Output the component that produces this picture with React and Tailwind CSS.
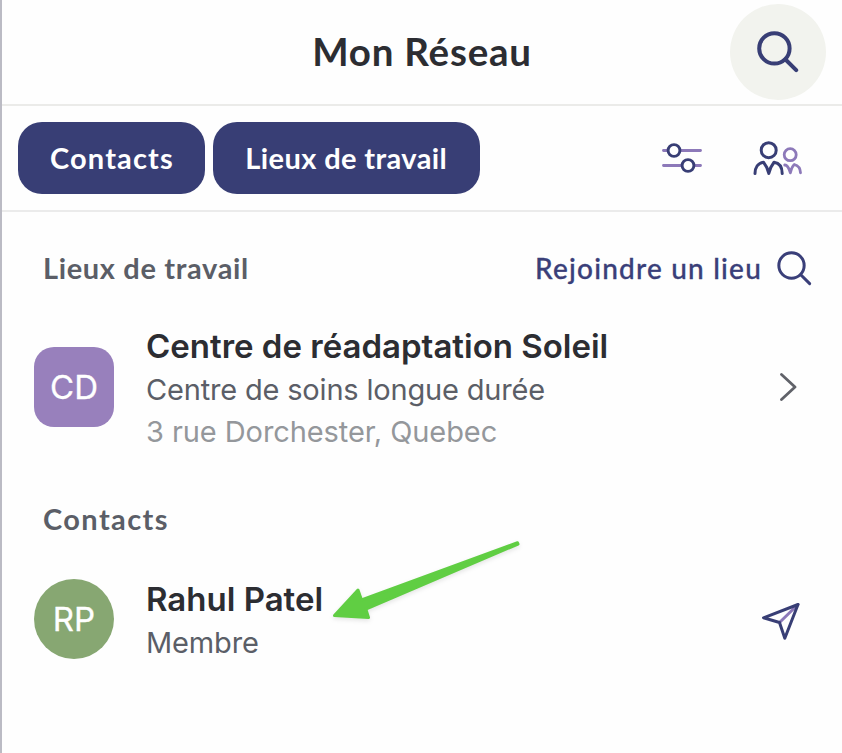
const heading = "font-['Lato','Open_Sans',sans-serif]";

function SearchIcon({ className, strokeWidth }) {
  return (
    <svg className={className} viewBox="0 0 42 42" fill="none" stroke="currentColor" strokeWidth={strokeWidth} strokeLinecap="round">
      <circle cx="17.4" cy="17.4" r="15.2" />
      <path d="M28.5 28.5L39.2 39.2" />
    </svg>
  );
}

function FilterIcon() {
  return (
    <svg className="h-[32px] w-[40px]" viewBox="0 0 40 32" fill="none" strokeWidth="2.9" strokeLinecap="round">
      <path d="M1.5 8.5H38.5M1.5 23.5H38.5" stroke="#8d79b9" />
      <circle cx="12" cy="8.5" r="5.9" fill="#fff" stroke="#383e75" />
      <circle cx="26" cy="23.5" r="5.9" fill="#fff" stroke="#383e75" />
    </svg>
  );
}

function PeopleIcon() {
  return (
    <svg className="h-[36px] w-[50px]" viewBox="0 0 50 36" fill="none" strokeWidth="3" strokeLinecap="round" strokeLinejoin="round">
      <circle cx="15.7" cy="10.2" r="7.5" stroke="#383e75" />
      <path d="M2 33.5C2 27.5 5 23 10.500 22.2C12.800 25 14.800 28.500 15.800 33.500C16.800 28.500 18.800 25 21 22.200C26.500 23 29.200 27.500 29.200 33.500" stroke="#383e75" />
      <g stroke="#8d79b9" strokeWidth="2.8">
        <circle cx="37.2" cy="14.7" r="6" />
        <path d="M31.700 25C34.500 24.700 36 28.200 37.400 32.800C38.300 28.800 39.800 25.800 41.300 24.500C45.300 25.500 47.300 28.500 47.500 32.800" />
      </g>
    </svg>
  );
}

function SendIcon() {
  return (
    <svg className="h-[40px] w-[40px]" viewBox="0 0 40 40" fill="none" strokeWidth="3" strokeLinecap="round" strokeLinejoin="round">
      <path d="M18.500 20.500L37 2.500" stroke="#8d79b9" />
      <path d="M37 2.500L2.500 15.800L18.500 20.500L23.800 36.300Z" stroke="#383e75" />
    </svg>
  );
}

function Avatar({ className, children }) {
  return (
    <div className={`flex h-20 w-20 shrink-0 items-center justify-center text-[33px] leading-none text-white [-webkit-text-stroke:0.3px_#fff] ${className}`}>
      {children}
    </div>
  );
}

export default function App() {
  return (
    <div className="h-[753px] w-[842px] overflow-hidden border-l-2 border-[#bbbbc4] bg-[#fefefe] font-['Inter',sans-serif] text-[#2c2d32]">
      <header className="grid h-[106px] grid-cols-[1fr_auto_1fr] items-center border-b-2 border-[#ebebe9] pr-4 pl-4">
        <span />
        <h1 className={`${heading} pb-[3px] text-[38.5px] leading-[48px] font-bold tracking-[0.8px] whitespace-nowrap`}>Mon Réseau</h1>
        <button className="flex h-24 w-24 items-center justify-center justify-self-end rounded-full bg-[#f2f3ee] text-[#383e75]">
          <SearchIcon className="h-[42px] w-[42px]" strokeWidth={4} />
        </button>
      </header>

      <nav className="flex h-[106px] items-center border-b-2 border-[#ebebeb] pr-[39px] pl-4">
        <div className={`${heading} flex gap-2 text-[29px] font-bold text-white`}>
          <button className="h-[72px] w-[187px] rounded-[24px] bg-[#383e75] pl-px tracking-[1.15px] whitespace-nowrap">Contacts</button>
          <button className="h-[72px] w-[266.500px] rounded-[24px] bg-[#383e75] tracking-[0.4px] whitespace-nowrap">Lieux de travail</button>
        </div>
        <div className="ml-auto flex items-center gap-[51px]">
          <FilterIcon />
          <PeopleIcon />
        </div>
      </nav>

      <main>
        <div className={`${heading} flex h-[112px] items-center justify-between pr-[30px] pl-[41px] text-[29px] font-bold`}>
          <h2 className="tracking-[0.65px] text-[#5b5e67]">Lieux de travail</h2>
          <button className="flex items-center gap-[15px] text-[28px] font-medium tracking-[1.2px] text-[#3a3f79]">
            <span className="[-webkit-text-stroke:0.3px_#3a3f79]">Rejoindre un lieu</span>
            <SearchIcon className="mt-px h-[35px] w-[35px]" strokeWidth={3.6} />
          </button>
        </div>

        <div className="mt-[2px] flex h-[122px] items-center pr-[45px] pl-8">
          <Avatar className="rounded-[20px] bg-[#9880bc]">CD</Avatar>
          <div className="ml-8 pt-[3px] whitespace-nowrap">
            <h3 className="text-[33px] leading-[43px] font-semibold">Centre de réadaptation Soleil</h3>
            <p className="text-[29px] leading-[43px] tracking-[-0.18px] text-[#5b5e67]">Centre de soins longue durée</p>
            <p className="text-[29px] leading-[42px] tracking-[-0.08px] text-[#94979b]">3 rue Dorchester, Quebec</p>
          </div>
          <svg className="ml-auto h-[28px] w-[17px]" viewBox="0 0 17 28" fill="none" stroke="#606269" strokeWidth="2.8" strokeLinecap="round" strokeLinejoin="round">
            <path d="M1.500 1.500L15 14L1.500 26.500" />
          </svg>
        </div>

        <h2 className={`${heading} mt-[48px] pl-[41px] text-[29px] leading-[46px] font-bold tracking-[1.4px] text-[#5b5e67]`}>Contacts</h2>

        <div className="relative mt-[34px] flex h-[86px] items-center pr-[41px] pl-8">
          <Avatar className="rounded-full bg-[#87a772]">RP</Avatar>
          <div className="ml-8 pt-[3px] whitespace-nowrap">
            <h3 className="text-[33px] leading-[43px] font-semibold">Rahul Patel</h3>
            <p className="text-[29px] leading-[43px] tracking-[-0.15px] text-[#5b5e67]">Membre</p>
          </div>
          <div className="ml-auto pt-[6px]">
            <SendIcon />
          </div>
          <svg className="absolute -top-[36px] left-[328px] h-[84px] w-[194px] drop-shadow-[0_2px_2px_rgba(0,0,0,0.1)]" viewBox="0 0 194 84" fill="#60ce43" stroke="#60ce43" strokeWidth="3" strokeLinejoin="round">
            <path d="M4.500 75.500L28 50L31.500 60L187.500 2.700L188 4L35.800 69L38.500 77.500Z" />
          </svg>
        </div>
      </main>
    </div>
  );
}
